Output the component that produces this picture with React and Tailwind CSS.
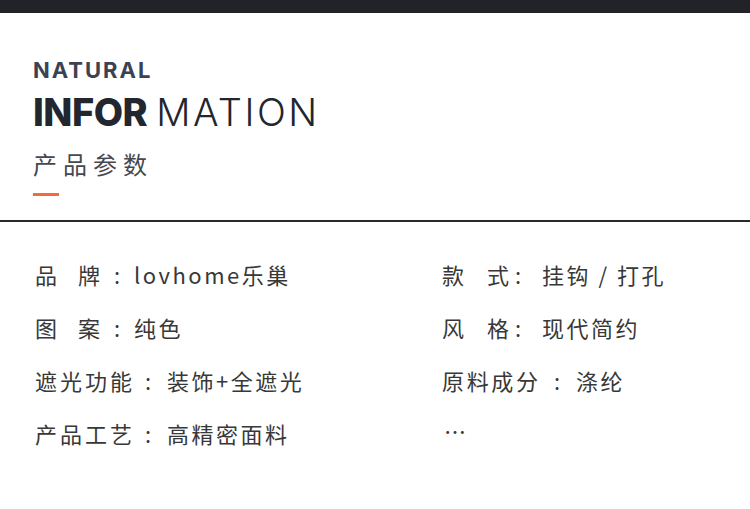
import React from 'react';

const cjk = { fontFamily: '"Noto Sans CJK SC", "Noto Sans", sans-serif' };

const leftRows = [
  { label: ['品', '牌'], value: 'lovhome乐巢' },
  { label: ['图', '案'], value: '纯色' },
  { label: ['遮', '光', '功', '能'], value: '装饰+全遮光' },
  { label: ['产', '品', '工', '艺'], value: '高精密面料' },
];

const rightRows = [
  { label: ['款', '式'], value: '挂钩 / 打孔' },
  { label: ['风', '格'], value: '现代简约' },
  { label: ['原', '料', '成', '分'], value: '涤纶' },
];

function Row({ label, value, side }) {
  const short = label.length === 2;
  let labelW, colonW, valueMl;
  if (side === 'left') {
    labelW = short ? 'w-[65px]' : 'w-[97px]';
    colonW = short ? 'w-[34px]' : 'w-[32px]';
    valueMl = short ? 'ml-0' : 'ml-[3px]';
  } else {
    labelW = short ? 'w-[67px]' : 'w-[96px]';
    colonW = short ? 'w-[18px]' : 'w-[38px]';
    valueMl = short ? 'ml-[15px]' : 'ml-0';
  }
  return (
    <div className="flex items-center h-[22px] text-[22px] leading-[22px] text-[#383838]">
      <span className={`flex justify-between shrink-0 ${labelW}`}>
        {label.map((c, i) => (
          <span key={i}>{c}</span>
        ))}
      </span>
      <span className={`shrink-0 text-center ${colonW}`}>:</span>
      <span className={`whitespace-nowrap tracking-[2.5px] ${valueMl}`}>{value}</span>
    </div>
  );
}

export default function App() {
  return (
    <div className="w-[750px] h-[509px] bg-white overflow-hidden" style={cjk}>
      {/* top strip */}
      <div className="h-[13px] bg-[#222229]" />

      {/* heading */}
      <div className="pl-[33px] pt-[46px]">
        <div
          className="text-[22px] leading-[22px] font-bold text-[#3b4252] tracking-[2px]"
          style={{ fontFamily: 'Inter, "Noto Sans", sans-serif' }}
        >
          NATURAL
        </div>
        <div
          className="mt-[12px] text-[38px] leading-[38px] text-[#22262f] whitespace-nowrap"
          style={{ fontFamily: 'Inter, "Noto Sans", sans-serif' }}
        >
          <span className="font-extrabold tracking-[-0.5px]">INFOR</span>
          <span className="font-light tracking-[2.5px] ml-[9px]">MATION</span>
        </div>
        <div className="mt-[21px] text-[24px] leading-[24px] text-[#454851] tracking-[6px]">产品参数</div>
        <div className="mt-[17px] w-[26px] h-[3px] bg-[#f26b3a]" />
      </div>

      {/* divider */}
      <div className="mt-[24px] h-[2px] bg-[#2a2a2a]" />

      {/* specs */}
      <div className="pt-[41px] pl-[35px] grid grid-cols-[407px_1fr]">
        <div className="flex flex-col gap-y-[31px]">
          {leftRows.map((r, i) => (
            <Row key={i} {...r} side="left" />
          ))}
        </div>
        <div className="flex flex-col gap-y-[31px]">
          {rightRows.map((r, i) => (
            <Row key={i} {...r} side="right" />
          ))}
          <div className="h-[22px] text-[22px] leading-[22px] text-[#383838] -mt-[3px] ml-[2px]">…</div>
        </div>
      </div>
    </div>
  );
}
